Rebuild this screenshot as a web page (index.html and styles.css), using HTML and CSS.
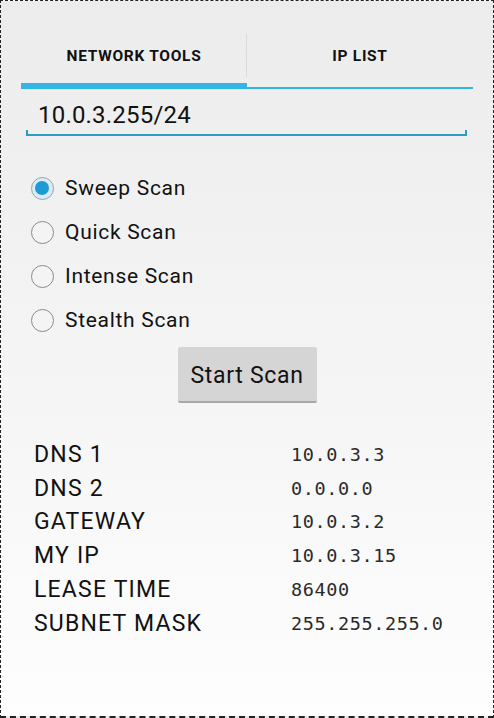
FILE: index.html
```html
<!DOCTYPE html>
<html lang="en">
<head>
    <meta charset="UTF-8">
    <meta name="viewport" content="width=device-width, initial-scale=1.0">
    <title>Network Tools</title>
    <link rel="stylesheet" href="styles.css">
</head>
<body>
    <div class="screen">
        <div class="tabs">
            <div class="tab active">NETWORK TOOLS</div>
            <div class="tab">IP LIST</div>
        </div>

        <div class="field">
            <span class="field-text">10.0.3.255/24</span>
        </div>

        <div class="scanTypes">
            <label class="radio"><span class="dot checked"></span>Sweep Scan</label>
            <label class="radio"><span class="dot"></span>Quick Scan</label>
            <label class="radio"><span class="dot"></span>Intense Scan</label>
            <label class="radio"><span class="dot"></span>Stealth Scan</label>
        </div>

        <div class="actions">
            <button class="scanButton">Start Scan</button>
        </div>

        <div class="info">
            <div class="info-label">DNS 1</div><div class="info-value">10.0.3.3</div>
            <div class="info-label">DNS 2</div><div class="info-value">0.0.0.0</div>
            <div class="info-label">GATEWAY</div><div class="info-value">10.0.3.2</div>
            <div class="info-label">MY IP</div><div class="info-value">10.0.3.15</div>
            <div class="info-label">LEASE TIME</div><div class="info-value">86400</div>
            <div class="info-label">SUBNET MASK</div><div class="info-value">255.255.255.0</div>
        </div>
    </div>
</body>
</html>
```

FILE: styles.css
```css
html, body {
    margin: 0;
    padding: 0;
}
body {
    font-family: Roboto, "Noto Sans", sans-serif;
    color: #111;
}
.screen {
    box-sizing: border-box;
    width: 494px;
    height: 718px;
    border: 1px dashed #222;
    border-bottom-width: 2px;
    background: linear-gradient(#ececec, #f6f6f6 60%, #fefefe);
    padding: 32px 20px 0 20px;
}
.tabs {
    display: flex;
    height: 54px;
    border-bottom: 2px solid #33b5e5;
}
.tab {
    flex: 1;
    display: flex;
    align-items: center;
    justify-content: center;
    font-size: 15.5px;
    font-weight: bold;
    letter-spacing: 0.7px;
    color: #111;
    padding-bottom: 8px;
}
.tab.active {
    border-bottom: 6px solid #33b5e5;
    margin-bottom: -2px;
    padding-bottom: 4px;
    position: relative;
}
.tab.active::after {
    content: "";
    position: absolute;
    right: 0;
    top: 1px;
    bottom: 6px;
    width: 1px;
    background: #dadada;
}
.field {
    margin: 9px 6px 0 5px;
    height: 36px;
    border-bottom: 2px solid #2a9ec9;
    border-left: 2px solid #2a9ec9;
    border-right: 2px solid #2a9ec9;
    border-image: linear-gradient(transparent 88%, #2a9ec9 88%) 1;
    display: flex;
    align-items: flex-end;
    padding-left: 10px;
}
.field-text {
    font-size: 24px;
    letter-spacing: 0.2px;
    line-height: 30px;
    padding-bottom: 4px;
}
.scanTypes {
    display: flex;
    flex-direction: column;
    margin-top: 30px;
    padding-left: 10px;
}
.radio {
    display: flex;
    align-items: center;
    height: 44px;
    font-size: 21px;
    letter-spacing: 0.7px;
    color: #111;
}
.dot {
    box-sizing: border-box;
    width: 23px;
    height: 23px;
    border-radius: 50%;
    border: 1.5px solid #8a8a8a;
    margin-right: 11px;
    background: #f4f4f4;
    position: relative;
}
.dot.checked {
    border-color: #8aa9b6;
    background: #dcecf2;
}
.dot.checked::after {
    content: "";
    position: absolute;
    left: 3px;
    top: 3px;
    width: 14px;
    height: 14px;
    border-radius: 50%;
    background: #1e9ad6;
}
.actions {
    display: flex;
    justify-content: center;
    margin-top: 5px;
}
.scanButton {
    width: 139px;
    height: 56px;
    font-family: Roboto, sans-serif;
    font-size: 23px;
    letter-spacing: 0.7px;
    color: #111;
    background: #d5d5d5;
    border: none;
    border-bottom: 2px solid #a8a8a8;
    border-radius: 2px;
    padding: 3px 0 0 0;
}
.info {
    display: grid;
    grid-template-columns: 257px auto;
    margin-top: 35px;
    padding-left: 13px;
}
.info-label {
    font-size: 23px;
    letter-spacing: 1.2px;
    height: 33.7px;
    line-height: 33.7px;
}
.info-value {
    font-family: "DejaVu Sans Mono", "Liberation Mono", monospace;
    font-size: 18.5px;
    letter-spacing: 0.6px;
    line-height: 33.7px;
    color: #2a2a2a;
}
```
